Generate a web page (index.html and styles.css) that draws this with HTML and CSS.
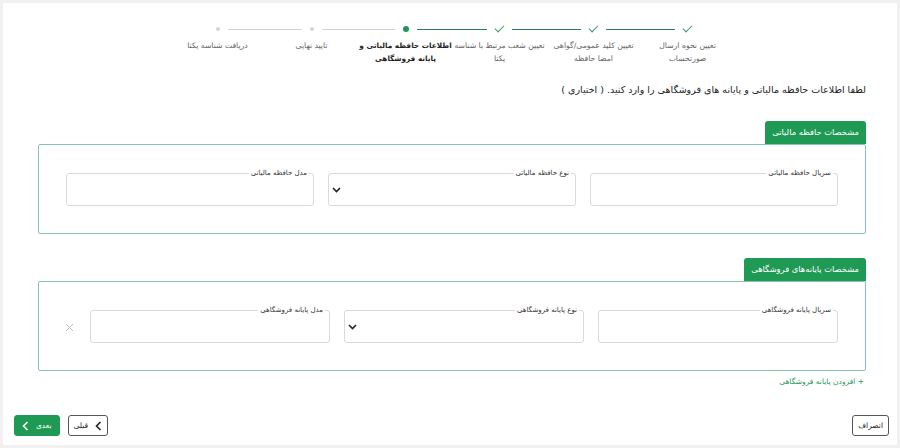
FILE: index.html
```html
<!DOCTYPE html>
<html lang="fa" dir="rtl">
  <head>
    <meta charset="UTF-8" />
    <meta name="viewport" content="width=device-width, initial-scale=1.0" />
    <title>اطلاعات حافظه مالیاتی</title>
    <link rel="stylesheet" href="styles.css">
  </head>
  <body>
    <div class="card">
      <ul class="stepper">
        <li class="step done">
          <div class="marker"><span class="bar"></span><span class="check"></span><span class="bar"></span></div>
          <div class="label">تعیین نحوه ارسال<br>صورتحساب</div>
        </li>
        <li class="step done">
          <div class="marker"><span class="bar"></span><span class="check"></span><span class="bar"></span></div>
          <div class="label">تعیین کلید عمومی/گواهی<br>امضا حافظه</div>
        </li>
        <li class="step done">
          <div class="marker"><span class="bar"></span><span class="check"></span><span class="bar"></span></div>
          <div class="label">تعیین شعب مرتبط با شناسه<br>یکتا</div>
        </li>
        <li class="step current">
          <div class="marker"><span class="bar"></span><span class="dot"></span><span class="bar grey"></span></div>
          <div class="label">اطلاعات حافظه مالیاتی و<br>پایانه فروشگاهی</div>
        </li>
        <li class="step">
          <div class="marker"><span class="bar grey"></span><span class="dot"></span><span class="bar grey"></span></div>
          <div class="label">تایید نهایی</div>
        </li>
        <li class="step">
          <div class="marker"><span class="bar grey"></span><span class="dot"></span><span class="bar"></span></div>
          <div class="label">دریافت شناسه یکتا</div>
        </li>
      </ul>

      <p class="intro">لطفا اطلاعات حافظه مالیاتی و پایانه های فروشگاهی را وارد کنید. ( اختیاری )</p>

      <section class="group">
        <div class="tab">مشخصات حافظه مالیاتی</div>
        <div class="box first">
          <div class="row">
            <fieldset class="field">
              <legend>سریال حافظه مالیاتی</legend>
              <input type="text" />
            </fieldset>
            <fieldset class="field">
              <legend>نوع حافظه مالیاتی</legend>
              <div class="select">
                <svg width="9" height="6" viewBox="0 0 9 6"><path d="M1 1l3.5 3.5L8 1" fill="none" stroke="#222" stroke-width="1.6"/></svg>
              </div>
            </fieldset>
            <fieldset class="field">
              <legend>مدل حافظه مالیاتی</legend>
              <input type="text" />
            </fieldset>
          </div>
        </div>
      </section>

      <section class="group second-group">
        <div class="tab">مشخصات پایانه‌های فروشگاهی</div>
        <div class="box second">
          <div class="row terminals">
            <fieldset class="field">
              <legend>سریال پایانه فروشگاهی</legend>
              <input type="text" />
            </fieldset>
            <fieldset class="field">
              <legend>نوع پایانه فروشگاهی</legend>
              <div class="select">
                <svg width="9" height="6" viewBox="0 0 9 6"><path d="M1 1l3.5 3.5L8 1" fill="none" stroke="#222" stroke-width="1.6"/></svg>
              </div>
            </fieldset>
            <fieldset class="field">
              <legend>مدل پایانه فروشگاهی</legend>
              <input type="text" />
            </fieldset>
            <span class="remove">
              <svg width="9" height="9" viewBox="0 0 9 9"><path d="M1 1l7 7M8 1l-7 7" stroke="#bbb" stroke-width="1"/></svg>
            </span>
          </div>
        </div>
        <a class="add-link" href="#">+ افزودن پایانه فروشگاهی</a>
      </section>

      <div class="footer">
        <button class="btn outline">انصراف</button>
        <div class="nav">
          <button class="btn outline">
            <svg width="7" height="10" viewBox="0 0 7 10"><path d="M5.5 1L1.5 5l4 4" fill="none" stroke="#222" stroke-width="1.6"/></svg>
            قبلی
          </button>
          <button class="btn primary">
            بعدی
            <svg width="7" height="10" viewBox="0 0 7 10"><path d="M5.5 1L1.5 5l4 4" fill="none" stroke="#fff" stroke-width="1.6"/></svg>
          </button>
        </div>
      </div>
    </div>
  </body>
</html>
```

FILE: styles.css
```css
body {
  margin: 0;
  background: #f1f1f1;
  font-family: "DejaVu Sans", "Noto Sans", sans-serif;
  color: #222;
}
.card {
  margin: 3px;
  height: 442px;
  box-sizing: border-box;
  background: #fff;
  padding: 20px 31px 0 35px;
}
.stepper {
  list-style: none;
  margin: 0;
  padding: 0;
  display: flex;
  justify-content: center;
  margin-right: -1px;
}
.step {
  width: 94px;
  display: flex;
  flex-direction: column;
  align-items: center;
}
.marker {
  width: 100%;
  height: 12px;
  display: flex;
  align-items: center;
}
.bar {
  flex: 1;
  height: 1px;
  background: #2f7a5c;
}
.bar:first-child {
  margin-left: 8px;
}
.bar:last-child {
  margin-right: 8px;
}
.bar.grey {
  background: #d4d4d4;
}
.step:first-child .bar:first-child,
.step:last-child .bar:last-child {
  visibility: hidden;
}
.check {
  width: 8px;
  height: 4px;
  border-left: 1.3px solid #2c9c5e;
  border-bottom: 1.3px solid #2c9c5e;
  transform: translateY(-2px) rotate(-45deg);
}
.dot {
  width: 4px;
  height: 4px;
  border-radius: 50%;
  background: #d6d6d6;
}
.current .dot {
  width: 6px;
  height: 6px;
  background: #1e9657;
}
.label {
  margin-top: 4px;
  font-size: 7.7px;
  line-height: 13px;
  color: #666;
  text-align: center;
  white-space: nowrap;
}
.current .label {
  color: #222;
  font-weight: bold;
  font-size: 7.3px;
}
.intro {
  margin: 17px 0 0;
  font-size: 9.5px;
  line-height: 16px;
  color: #222;
}
.group {
  margin-top: 23px;
}
.second-group {
  margin-top: 24px;
}
.tab {
  display: inline-block;
  background: #1f9a55;
  color: #fff;
  font-size: 8.3px;
  line-height: 23px;
  padding: 0 7px;
  border-radius: 3px 3px 0 0;
  vertical-align: bottom;
}
.box {
  border: 1px solid #86c6ad;
  border-radius: 2px;
  padding: 23px 27px 27px 27px;
}
.box.second {
  padding: 23px 27px 27px 22px;
}
.row {
  display: grid;
  grid-template-columns: 1fr 1fr 1fr;
  column-gap: 14px;
}
.row.terminals {
  grid-template-columns: 240px 240px 240px 14px;
  align-items: end;
}
.field {
  margin: 0;
  padding: 0 3px;
  border: 1px solid #d9d9d9;
  border-radius: 3px;
  min-width: 0;
}
.field legend {
  font-size: 7px;
  line-height: 10px;
  padding: 0 2px;
  margin-right: 1px;
  color: #333;
}
.field input {
  display: block;
  width: 100%;
  height: 27px;
  border: none;
  outline: none;
  padding: 0;
  background: transparent;
}
.select {
  height: 27px;
  display: flex;
  align-items: center;
  justify-content: flex-end;
  padding: 0 5px 3px 0;
  box-sizing: border-box;
}
.remove {
  height: 32px;
  display: flex;
  align-items: center;
  justify-content: center;
}
.add-link {
  display: block;
  margin: 5px 2px 0 0;
  font-size: 7.5px;
  line-height: 12px;
  color: #1f9a55;
  text-decoration: none;
}
.footer {
  display: flex;
  justify-content: space-between;
  margin: 27px -23px 0 -24px;
}
.nav {
  display: flex;
  gap: 8px;
}
.btn {
  font-family: inherit;
  font-size: 7.5px;
  height: 21px;
  padding: 0 5px;
  border-radius: 3px;
  display: flex;
  align-items: center;
  gap: 7px;
  cursor: pointer;
}
.btn.outline {
  background: #fff;
  border: 1px solid #555;
  color: #222;
}
.btn.primary {
  background: #1f9a55;
  border: 1px solid #1f9a55;
  color: #fff;
  padding: 0 7px 0 7px;
}
```
